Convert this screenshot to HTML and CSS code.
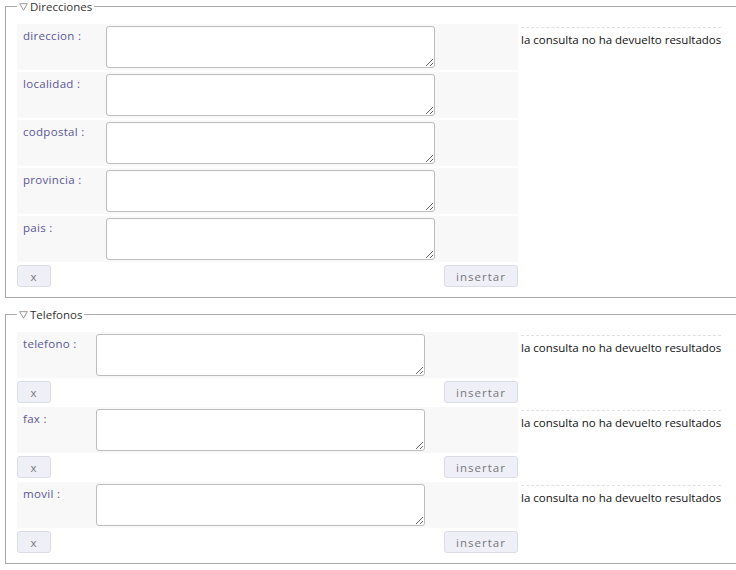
FILE: index.html
```html
<!DOCTYPE html>
<html lang="es">
<head>
  <meta charset="UTF-8">
  <title>Direcciones y telefonos</title>
  <link rel="stylesheet" href="styles.css">
</head>
<body>

  <!-- Bloque direcciones -->
  <fieldset class="grupo">
    <legend><svg class="flecha" width="9" height="8" viewBox="0 0 9 8"><path d="M0.7 0.7 H8.3 L4.5 7.3 Z" fill="none" stroke="#999" stroke-width="1"/></svg>Direcciones</legend>
    <table class="campos apilado">
      <tr class="fila">
        <td class="etiqueta">direccion :</td>
        <td class="caja"><textarea></textarea></td>
        <td class="relleno"></td>
        <td class="resultado" rowspan="6"><div class="vacio">la consulta no ha devuelto resultados</div></td>
      </tr>
      <tr class="fila">
        <td class="etiqueta">localidad :</td>
        <td class="caja"><textarea></textarea></td>
        <td class="relleno"></td>
      </tr>
      <tr class="fila">
        <td class="etiqueta">codpostal :</td>
        <td class="caja"><textarea></textarea></td>
        <td class="relleno"></td>
      </tr>
      <tr class="fila">
        <td class="etiqueta">provincia :</td>
        <td class="caja"><textarea></textarea></td>
        <td class="relleno"></td>
      </tr>
      <tr class="fila">
        <td class="etiqueta">pais :</td>
        <td class="caja"><textarea></textarea></td>
        <td class="relleno"></td>
      </tr>
      <tr class="botones">
        <td colspan="3"><div class="acciones"><button class="boton borrar">x</button><button class="boton">insertar</button></div></td>
      </tr>
    </table>
  </fieldset>

  <!-- Bloque telefonos -->
  <fieldset class="grupo">
    <legend><svg class="flecha" width="9" height="8" viewBox="0 0 9 8"><path d="M0.7 0.7 H8.3 L4.5 7.3 Z" fill="none" stroke="#999" stroke-width="1"/></svg>Telefonos</legend>
    <table class="campos">
      <tr class="fila">
        <td class="etiqueta">telefono :</td>
        <td class="caja"><textarea></textarea></td>
        <td class="relleno"></td>
        <td class="resultado"><div class="vacio">la consulta no ha devuelto resultados</div></td>
      </tr>
      <tr class="botones">
        <td colspan="3"><div class="acciones"><button class="boton borrar">x</button><button class="boton">insertar</button></div></td>
        <td></td>
      </tr>
      <tr class="fila">
        <td class="etiqueta">fax :</td>
        <td class="caja"><textarea></textarea></td>
        <td class="relleno"></td>
        <td class="resultado"><div class="vacio">la consulta no ha devuelto resultados</div></td>
      </tr>
      <tr class="botones">
        <td colspan="3"><div class="acciones"><button class="boton borrar">x</button><button class="boton">insertar</button></div></td>
        <td></td>
      </tr>
      <tr class="fila">
        <td class="etiqueta">movil :</td>
        <td class="caja"><textarea></textarea></td>
        <td class="relleno"></td>
        <td class="resultado"><div class="vacio">la consulta no ha devuelto resultados</div></td>
      </tr>
      <tr class="botones">
        <td colspan="3"><div class="acciones"><button class="boton borrar">x</button><button class="boton">insertar</button></div></td>
        <td></td>
      </tr>
    </table>
  </fieldset>

</body>
</html>
```

FILE: styles.css
```css
/* General */
html, body {
  overflow: hidden;
}

body {
  margin: 0;
  font-family: "Open Sans", "DejaVu Sans", sans-serif;
  font-size: 11.5px;
  color: #111;
  background: #fff;
}

/* Fieldsets */
.grupo {
  margin: 0 -20px 10px 5px;
  padding: 11px 11px 6px 11px;
  border: 1px solid #aaa;
  border-right: none;
}

.grupo legend {
  padding: 0 2px;
  font-size: 11.5px;
  line-height: 13px;
  color: #333;
}

.flecha {
  margin-right: 2px;
  vertical-align: 0;
}

/* Form table */
.campos {
  border-collapse: collapse;
}

.campos .fila td {
  vertical-align: top;
}

.campos .fila .etiqueta,
.campos .fila .caja,
.campos .fila .relleno {
  background: #f8f8f8;
}

.apilado .fila .etiqueta,
.apilado .fila .caja,
.apilado .fila .relleno {
  border-bottom: 2px solid #fff;
}

.etiqueta {
  box-sizing: border-box;
  width: 79px;
  padding: 4px 0 0 6px;
  color: #58579a;
  letter-spacing: 0.3px;
  white-space: nowrap;
}

.apilado .etiqueta {
  width: 89px;
}

.caja {
  padding: 2px 0;
}

.caja textarea {
  display: block;
  width: 329px;
  height: 42px;
  margin: 0;
  box-sizing: border-box;
  border: 1px solid #bcbcbc;
  border-radius: 3px;
  background: #fff;
  font-family: inherit;
}

.relleno {
  width: 91px;
}

.apilado .relleno {
  width: 81px;
}

.resultado {
  vertical-align: top;
  padding: 0 0 0 3px;
  white-space: nowrap;
}

.vacio {
  display: inline-block;
  margin-top: 3px;
  padding-top: 4px;
  border-top: 1px dashed #e0e0e0;
}

/* Buttons */
.botones td {
  padding: 1px 0 4px 0;
}

.campos:not(.apilado) .botones td {
  padding: 3px 0 4px 0;
}

.acciones {
  display: flex;
  justify-content: space-between;
}

.boton {
  height: 22px;
  width: 74px;
  padding: 0;
  border: 1px solid #dcdce4;
  border-radius: 3px;
  background: #efeff8;
  font-family: inherit;
  font-size: 11.5px;
  letter-spacing: 1px;
  color: #777;
}

.boton.borrar {
  width: 34px;
}
```
